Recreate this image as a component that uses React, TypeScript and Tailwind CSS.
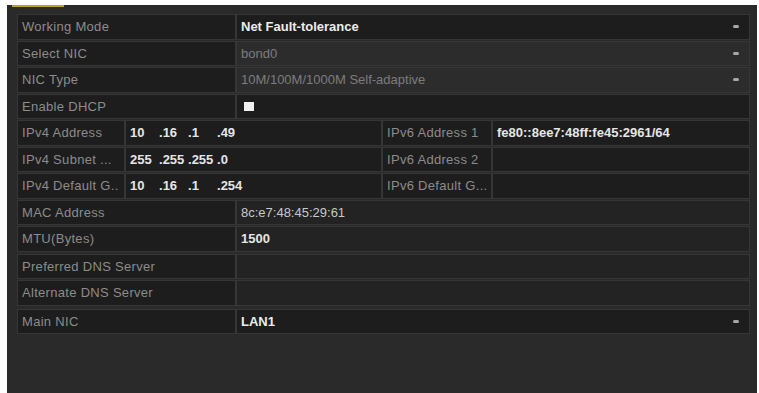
import React from 'react';

type Tone = 'dark' | 'mid' | 'light';

const cellBg: Record<Tone, string> = {
  dark: 'bg-[#1d1d1d]',
  mid: 'bg-[#232323]',
  light: 'bg-[#2c2c2c]',
};

const Arrow = () => <span className="ml-auto mr-[6px] h-[3px] w-[6px] rounded-full bg-[#a8a8a8]" />;

const Cell: React.FC<{ className?: string; tone?: Tone; children?: React.ReactNode }> = ({ className = '', tone = 'dark', children }) => (
  <div className={`flex h-full items-center overflow-hidden whitespace-nowrap border border-[#363636] px-[4px] ${cellBg[tone]} ${className}`}>{children}</div>
);

const Label: React.FC<{ text: string; w?: string }> = ({ text, w = 'w-[219px]' }) => (
  <Cell className={`${w} shrink-0 tracking-[0.3px] text-[#8c8c8c]`}>{text}</Cell>
);

const Row: React.FC<{ children: React.ReactNode; className?: string }> = ({ children, className = '' }) => (
  <div className={`flex h-[25.5px] ${className}`}>{children}</div>
);

const Ip: React.FC<{ parts: string[] }> = ({ parts }) => (
  <div className="flex font-bold text-[#e6e6e6]">
    {parts.map((p, i) => (
      <span key={i} className="w-[29px] shrink-0">
        {i > 0 ? '.' : ''}
        {p}
      </span>
    ))}
  </div>
);

const ipRows = [
  { l: 'IPv4 Address', v: ['10', '16', '1', '49'], l6: 'IPv6 Address 1', v6: 'fe80::8ee7:48ff:fe45:2961/64' },
  { l: 'IPv4 Subnet ...', v: ['255', '255', '255', '0'], l6: 'IPv6 Address 2', v6: '' },
  { l: 'IPv4 Default G..', v: ['10', '16', '1', '254'], l6: 'IPv6 Default G...', v6: '' },
];

export default function App() {
  return (
    <div className="h-[393px] w-[759px] overflow-hidden bg-white" style={{ fontFamily: '"Liberation Sans", Arial, sans-serif' }}>
      <div className="ml-[7px] mt-[5px] flex h-[388px] w-[750px] flex-col bg-[#2a2a2a] text-[13px]">
        <div className="ml-[5px] h-[2px] w-[52px] bg-[#b9a526]" />
        <div className="flex flex-col gap-[1px] pl-[10px] pr-[7px] pt-[7px]">
          <Row>
            <Label text="Working Mode" />
            <Cell className="flex-1 font-bold text-[#ececec]">
              Net Fault-tolerance
              <Arrow />
            </Cell>
          </Row>
          <Row>
            <Label text="Select NIC" />
            <Cell tone="light" className="flex-1 text-[#7c7c7c]">
              bond0
              <Arrow />
            </Cell>
          </Row>
          <Row>
            <Label text="NIC Type" />
            <Cell tone="light" className="flex-1 text-[#7c7c7c]">
              10M/100M/1000M Self-adaptive
              <Arrow />
            </Cell>
          </Row>
          <Row>
            <Label text="Enable DHCP" />
            <Cell className="flex-1">
              <span className="ml-[3px] h-[9px] w-[10px] bg-[#f0f0f0]" />
            </Cell>
          </Row>
          {ipRows.map((r) => (
            <Row key={r.l}>
              <Label text={r.l} w="w-[108px]" />
              <Cell className="w-[257px] shrink-0">
                <Ip parts={r.v} />
              </Cell>
              <Label text={r.l6} w="w-[110px]" />
              <Cell className="flex-1 font-bold text-[#e6e6e6]">{r.v6}</Cell>
            </Row>
          ))}
          <Row>
            <Label text="MAC Address" />
            <Cell tone="mid" className="flex-1 text-[#c8c8c8]">8c:e7:48:45:29:61</Cell>
          </Row>
          <Row>
            <Label text="MTU(Bytes)" />
            <Cell tone="mid" className="flex-1 font-bold text-[#e6e6e6]">1500</Cell>
          </Row>
          <Row className="mt-[1px]">
            <Label text="Preferred DNS Server" />
            <Cell tone="mid" className="flex-1" />
          </Row>
          <Row>
            <Label text="Alternate DNS Server" />
            <Cell tone="mid" className="flex-1" />
          </Row>
          <Row className="mt-[2px]">
            <Label text="Main NIC" />
            <Cell className="flex-1 font-bold text-[#ececec]">
              LAN1
              <Arrow />
            </Cell>
          </Row>
        </div>
      </div>
    </div>
  );
}
